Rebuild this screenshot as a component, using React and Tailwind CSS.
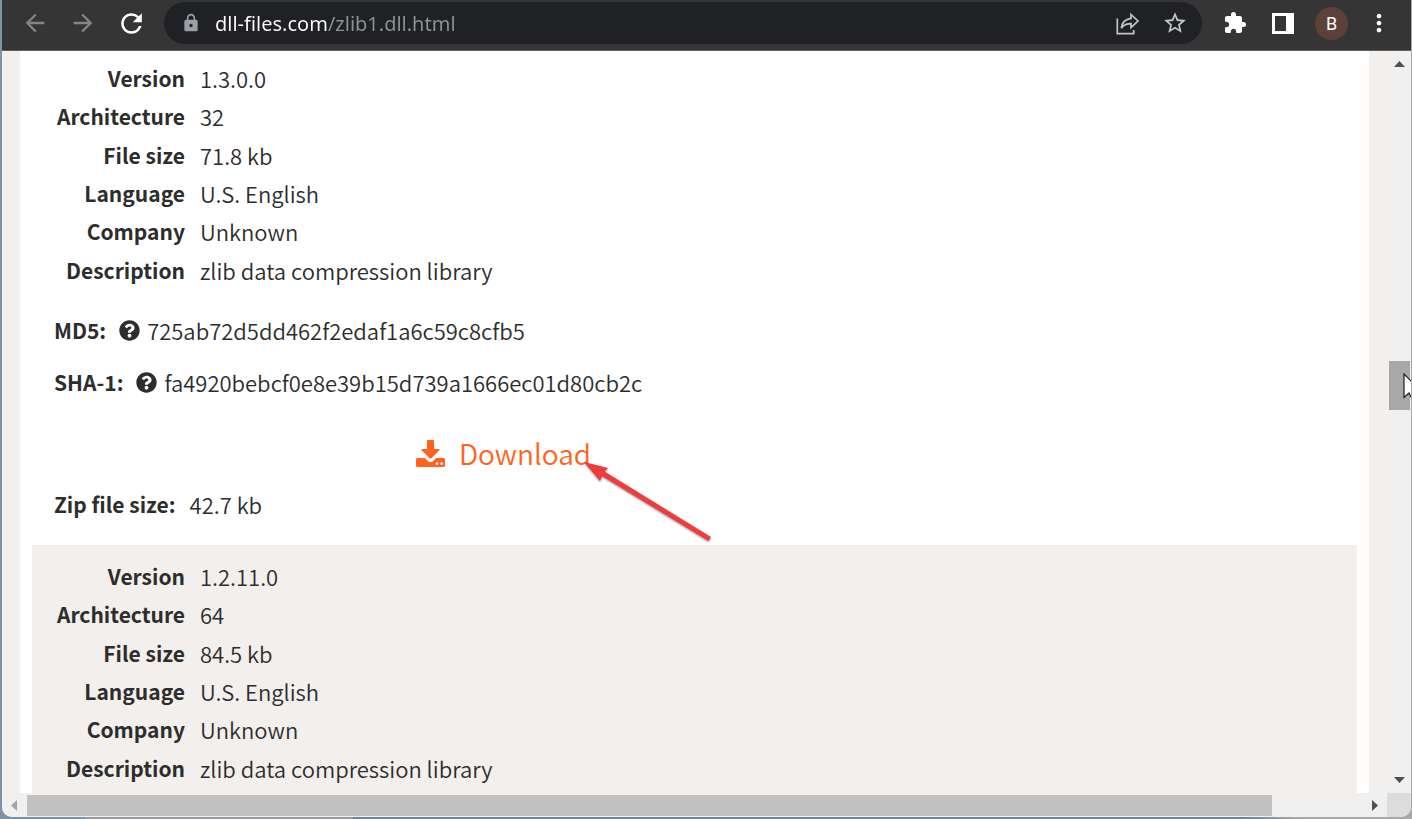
import React, { useState } from "react";
import {
  MdArrowBack,
  MdArrowForward,
  MdExtension,
  MdLock,
  MdMoreVert,
  MdRefresh,
  MdStarBorder,
} from "react-icons/md";
import { FaQuestionCircle } from "react-icons/fa";

const files = [
  {
    details: [
      ["Version", "1.3.0.0"],
      ["Architecture", "32"],
      ["File size", "71.8 kb"],
      ["Language", "U.S. English"],
      ["Company", "Unknown"],
      ["Description", "zlib data compression library"],
    ],
    md5: "725ab72d5dd462f2edaf1a6c59c8cfb5",
    sha1: "fa4920bebcf0e8e39b15d739a1666ec01d80cb2c",
    zipSize: "42.7 kb",
  },
  {
    details: [
      ["Version", "1.2.11.0"],
      ["Architecture", "64"],
      ["File size", "84.5 kb"],
      ["Language", "U.S. English"],
      ["Company", "Unknown"],
      ["Description", "zlib data compression library"],
    ],
  },
];

const IconButton = ({ label, className = "", children }) => (
  <button
    type="button"
    aria-label={label}
    className={`flex h-7 w-7 shrink-0 items-center justify-center ${className}`}
  >
    {children}
  </button>
);

const ShareIcon = () => (
  <svg
    viewBox="0 0 26 26"
    className="h-[26px] w-[26px]"
    fill="none"
    stroke="currentColor"
    strokeWidth="1.7"
  >
    <path d="M3.300 8.500V23.700H19.700V20" />
    <path d="M17 4.500L24 11L17 17.500V13.700C12.500 13.700 9.500 14.900 7.300 18.200C8 12.500 11.300 9.200 17 8.400Z" />
  </svg>
);

const SidePanelIcon = () => (
  <svg viewBox="0 0 22 21" className="h-[21px] w-[22px]" fill="currentColor">
    <path fillRule="evenodd" d="M0 0h22v21H0zM3 3v15h11V3z" />
  </svg>
);

const DownloadIcon = () => (
  <svg viewBox="0 0 29 27" className="h-[27px] w-[29px]" fill="currentColor">
    <path d="M12 0h5q1 0 1 1v8h5q1.200.2.400 1.200l-8.200 8.200q-.7.700-1.400 0L5.600 10.200q-.8-1 .4-1.200h5V1q0-1 1-1z" />
    <path
      fillRule="evenodd"
      d="M1.500 18h7.300l3.400 3.200q2.300 1.800 4.600 0l3.400-3.200h7.300q1.500 0 1.500 1.500v6q0 1.500-1.500 1.500h-26q-1.500 0-1.500-1.500v-6q0-1.500 1.500-1.500zM21 22.300a1.300 1.300 0 1 0 .01 2.600a1.300 1.300 0 1 0-.01-2.600zM25.600 22.300a1.300 1.300 0 1 0 .01 2.600a1.300 1.300 0 1 0-.01-2.600z"
    />
  </svg>
);

const Toolbar = () => {
  const [url, setUrl] = useState("dll-files.com/zlib1.dll.html");

  return (
    <header className="flex h-[51px] shrink-0 items-start border-b border-[#5f5f5f] bg-[#353535] pt-[2px] pr-[18px] pl-[19px]">
      <div className="flex h-[42px] flex-1 items-center">
        <nav className="flex gap-5 text-[#858585]">
          <IconButton label="Back">
            <MdArrowBack size={28} />
          </IconButton>
          <IconButton label="Forward">
            <MdArrowForward size={28} />
          </IconButton>
          <IconButton label="Reload" className="text-white">
            <MdRefresh size={31} className="shrink-0" />
          </IconButton>
        </nav>

        <div className="ml-[19px] flex h-[42px] flex-1 items-center rounded-full bg-[#202124] pr-[14px] pl-[17px] text-[#c4c5c7]">
          <MdLock size={20} className="shrink-0 text-[#9aa0a6]" />
          <input
            type="text"
            aria-label="Address"
            value={url}
            onChange={(e) => setUrl(e.target.value)}
            className="ml-[14px] h-[34px] min-w-0 flex-1 bg-[linear-gradient(to_right,#ffffff_113px,#8f9195_113px)] bg-clip-text font-['Noto_Sans',sans-serif] text-[20px] text-transparent outline-none"
          />
          <div className="flex gap-[22px]">
            <button type="button" aria-label="Share this page">
              <ShareIcon />
            </button>
            <button type="button" aria-label="Bookmark this tab">
              <MdStarBorder size={26} />
            </button>
          </div>
        </div>

        <div className="ml-[19px] flex items-center text-white">
          <IconButton label="Extensions">
            <MdExtension size={24} />
          </IconButton>
          <IconButton label="Side panel" className="ml-5">
            <SidePanelIcon />
          </IconButton>
          <button
            type="button"
            aria-label="Profile"
            className="ml-[18px] h-[33px] w-[33px] rounded-full bg-[#5d4037] font-['Roboto',sans-serif] text-[18px] leading-[33px]"
          >
            B
          </button>
          <IconButton label="Menu" className="ml-[17px]">
            <MdMoreVert size={28} />
          </IconButton>
        </div>
      </div>
    </header>
  );
};

const Details = ({ rows }) => (
  <dl className="grid h-[230px] grid-cols-[131px_1fr] grid-rows-6 items-center gap-x-[15px]">
    {rows.map(([label, value]) => (
      <React.Fragment key={label}>
        <dt className="text-right text-[21px] font-bold">{label}</dt>
        <dd>{value}</dd>
      </React.Fragment>
    ))}
  </dl>
);

const Hash = ({ label, value, className }) => (
  <p className={`flex h-[38px] items-center ${className}`}>
    <strong className="text-[21px] font-bold">{label}:</strong>
    <button type="button" aria-label={`What is ${label}?`} className="mr-[7px] ml-[13px]">
      <FaQuestionCircle size={21} />
    </button>
    <span>{value}</span>
  </p>
);

const PointerArrow = () => (
  <svg
    viewBox="0 0 132 84"
    className="pointer-events-none absolute top-[30px] left-[166px] h-[84px] w-[132px] drop-shadow-[0_1px_1px_rgba(60,60,60,0.6)]"
    fill="#f03c3c"
  >
    <path d="M2 2L26 8L22.500 11.500L129 77L126.500 81L20 16L18 21z" />
  </svg>
);

const FileCard = ({ file, shaded }) => (
  <article
    className={
      shaded
        ? "bg-[#f3efec] px-[22px] pt-3 pb-[22px]"
        : "bg-white px-[22px] pt-2 pb-[22px]"
    }
  >
    <Details rows={file.details} />
    {file.md5 && (
      <>
        <Hash label="MD5" value={file.md5} className="mt-[22px]" />
        <Hash label="SHA-1" value={file.sha1} className="mt-[14px]" />
        <div className="relative mt-[29px] ml-[362px] w-fit">
          <a
            href="#download"
            className="flex h-[46px] items-center gap-[14px] text-[28px] text-[#ff6320]"
          >
            <DownloadIcon />
            Download
          </a>
          <PointerArrow />
        </div>
        <p className="mt-[9px] flex h-[38px] items-center gap-[14px]">
          <strong className="text-[21px] font-bold">Zip file size:</strong>
          <span>{file.zipSize}</span>
        </p>
      </>
    )}
  </article>
);

const VerticalScrollbar = () => (
  <div className="relative flex w-6 shrink-0 flex-col items-center bg-[#f0f0f0] text-[#505050]">
    <button type="button" aria-label="Scroll up" className="mt-[10px]">
      <svg viewBox="0 0 11 6" className="h-[6px] w-[11px]" fill="currentColor">
        <path d="M0 6L5.500 0L11 6z" />
      </svg>
    </button>
    <div className="flex w-full flex-1 flex-col pl-[2px] pr-px">
      <div className="grow-[294]"></div>
      <div className="h-[49px] bg-[#a8a8a8]"></div>
      <div className="grow-[367]"></div>
    </div>
    <button type="button" aria-label="Scroll down" className="mb-[10px]">
      <svg viewBox="0 0 11 6" className="h-[6px] w-[11px]" fill="currentColor">
        <path d="M0 0L5.500 6L11 0z" />
      </svg>
    </button>
    {/* mouse pointer resting on the thumb */}
    <svg
      viewBox="0 0 9 28"
      className="absolute top-[322px] -right-px h-[28px] w-[9px]"
      fill="white"
      stroke="#1c1c1c"
      strokeWidth="1.2"
    >
      <path d="M1 1V24.500L6 20L9 26L16 26V16z" />
    </svg>
  </div>
);

const HorizontalScrollbar = () => (
  <div className="flex h-6 shrink-0">
    <div className="flex flex-1 items-center bg-[#f0f0f0]">
      <button type="button" aria-label="Scroll left" className="pr-[10px] pl-[9px] text-[#a3a3a3]">
        <svg viewBox="0 0 6 11" className="h-[11px] w-[6px]" fill="currentColor">
          <path d="M6 0L0 5.500L6 11z" />
        </svg>
      </button>
      <div className="flex h-[21px] flex-1">
        <div className="grow-[1245] bg-[#c1c1c1]"></div>
        <div className="grow-[90]"></div>
      </div>
      <button type="button" aria-label="Scroll right" className="pr-[9px] pl-[10px] text-[#505050]">
        <svg viewBox="0 0 6 11" className="h-[11px] w-[6px]" fill="currentColor">
          <path d="M0 0L6 5.500L0 11z" />
        </svg>
      </button>
    </div>
    <div className="w-6 bg-[#dcdcdc]"></div>
  </div>
);

export default function App() {
  return (
    <div className="h-screen overflow-hidden bg-[linear-gradient(to_right,#7d92a5_6%,#9a9a9c_6%,#9a9a9c_25%,#6d8296_25%,#6d8296_88%,#a9a9a9_92%)] pr-px pb-[2px] pl-[2px]">
      <div className="flex h-full flex-col overflow-hidden rounded-b-[10px] bg-[#f3efec]">
        <Toolbar />
        <div className="flex min-h-0 flex-1">
          <main className="mr-[18px] ml-[18px] min-w-0 flex-1 overflow-hidden bg-white px-3 font-['Noto_Sans_CJK_SC',sans-serif] text-[22px] leading-[38px] font-[350] text-[#2d2d2d]">
            {files.map((file, index) => (
              <FileCard key={index} file={file} shaded={index % 2 === 1} />
            ))}
          </main>
          <VerticalScrollbar />
        </div>
        <HorizontalScrollbar />
      </div>
    </div>
  );
}
